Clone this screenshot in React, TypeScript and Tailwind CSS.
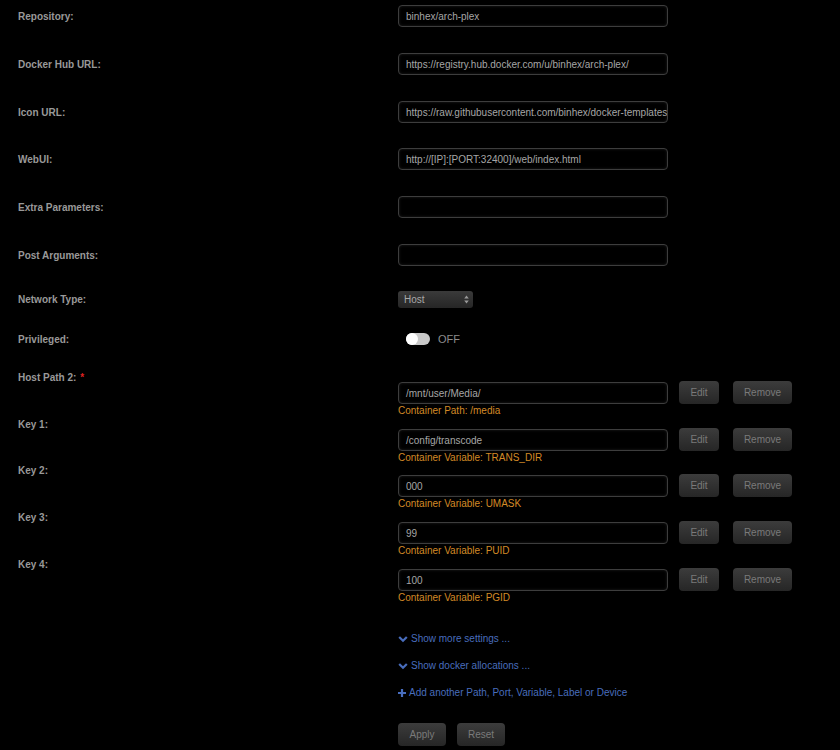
import React from "react";

const labelCls = "w-[380px] shrink-0 text-[10px] leading-[12px] font-bold text-[#999999]";
const inputCls =
  "w-[270px] h-[22px] shrink-0 rounded-[4px] border border-[#3d3d3d] bg-black pl-[7px] text-[10px] text-[#a6a6a6] leading-[21px] overflow-hidden whitespace-nowrap shadow-[inset_0_0_3px_rgba(255,255,255,0.12)]";
const btnCls =
  "h-[23px] rounded-[4px] bg-gradient-to-b from-[#3c3c3c] to-[#262626] text-[10px] text-[#7a7a7a] flex items-center justify-center shadow-[0_1px_1px_rgba(0,0,0,0.6)]";

function TextRow({ label, value }: { label: string; value: string }) {
  return (
    <div className="flex items-center h-[22px]">
      <div className={labelCls + " pt-[2px]"}>{label}</div>
      <div className={inputCls}>{value}</div>
    </div>
  );
}

function KeyBlock({ label, value, help, req }: { label: string; value: string; help: string; req?: boolean }) {
  return (
    <div className="flex items-start h-[46.75px]">
      <div className={labelCls + " pt-[1px]"}>
        {label}
        {req && <span className="text-[#d22] ml-[4px]">*</span>}
      </div>
      <div className="mt-[11px] flex flex-col">
        <div className="flex items-center">
          <div className={inputCls}>{value}</div>
          <div className={btnCls + " w-[40px] ml-[11px] -mt-[1px]"}>Edit</div>
          <div className={btnCls + " w-[59px] ml-[14px] -mt-[1px]"}>Remove</div>
        </div>
        <div className="text-[10px] leading-[12px] pt-[1px] text-[#d38a26]">{help}</div>
      </div>
    </div>
  );
}

function Chevron() {
  return (
    <svg width="10" height="8" viewBox="0 0 10 8" className="mr-[3px]">
      <path d="M1.2 2 L5 5.8 L8.8 2" stroke="#486dbd" strokeWidth="2.2" fill="none" />
    </svg>
  );
}

function Plus() {
  return (
    <svg width="8" height="8" viewBox="0 0 8 8" className="mr-[3px]">
      <path d="M4 0 V8 M0 4 H8" stroke="#486dbd" strokeWidth="2.2" />
    </svg>
  );
}

export default function App() {
  return (
    <div className="bg-black w-full h-[750px] overflow-hidden pl-[18px] font-['Liberation_Sans',Arial,sans-serif]">
      <div className="flex flex-col pt-[5px] gap-[25.8px]">
        <TextRow label="Repository:" value="binhex/arch-plex" />
        <TextRow label="Docker Hub URL:" value="https://registry.hub.docker.com/u/binhex/arch-plex/" />
        <TextRow label="Icon URL:" value="https://raw.githubusercontent.com/binhex/docker-templates/master/binhex/images/plex-icon.png" />
        <TextRow label="WebUI:" value="http://[IP]:[PORT:32400]/web/index.html" />
        <TextRow label="Extra Parameters:" value="" />
        <TextRow label="Post Arguments:" value="" />
      </div>

      <div className="flex items-center h-[17px] mt-[25px]">
        <div className={labelCls + " pt-[1px]"}>Network Type:</div>
        <div className="w-[75px] h-[17px] rounded-[3px] bg-gradient-to-b from-[#3a3a3a] to-[#262626] flex items-center justify-between pl-[6px] pr-[4px] text-[10px] text-[#a8a8a8]">
          <span>Host</span>
          <svg width="5" height="9" viewBox="0 0 5 9">
            <path d="M2.5 0.5 L4.8 3.6 H0.2 Z M2.5 8.5 L4.8 5.4 H0.2 Z" fill="#9a9a9a" />
          </svg>
        </div>
      </div>

      <div className="flex items-center h-[12px] mt-[25px]">
        <div className={labelCls + " pt-[2px]"}>Privileged:</div>
        <div className="ml-[8px] w-[24px] h-[12px] rounded-full bg-[#c9c9c9] relative">
          <div className="absolute left-0 top-0 w-[12px] h-[12px] rounded-full bg-white" />
        </div>
        <span className="ml-[8px] text-[11px] text-[#8c8c8c]">OFF</span>
      </div>

      <div className="mt-[26px] flex flex-col">
        <KeyBlock label="Host Path 2:" value="/mnt/user/Media/" help="Container Path: /media" req />
        <KeyBlock label="Key 1:" value="/config/transcode" help="Container Variable: TRANS_DIR" />
        <KeyBlock label="Key 2:" value="000" help="Container Variable: UMASK" />
        <KeyBlock label="Key 3:" value="99" help="Container Variable: PUID" />
        <KeyBlock label="Key 4:" value="100" help="Container Variable: PGID" />
      </div>

      <div className="ml-[380px] mt-[28px] flex flex-col gap-[15px] text-[10px] leading-[12px] text-[#486dbd]">
        <div className="flex items-center"><Chevron />Show more settings ...</div>
        <div className="flex items-center"><Chevron />Show docker allocations ...</div>
        <div className="flex items-center"><Plus />Add another Path, Port, Variable, Label or Device</div>
      </div>

      <div className="ml-[380px] mt-[24px] flex gap-[11px]">
        <div className={btnCls + " w-[48px]"}>Apply</div>
        <div className={btnCls + " w-[48px]"}>Reset</div>
      </div>
    </div>
  );
}
